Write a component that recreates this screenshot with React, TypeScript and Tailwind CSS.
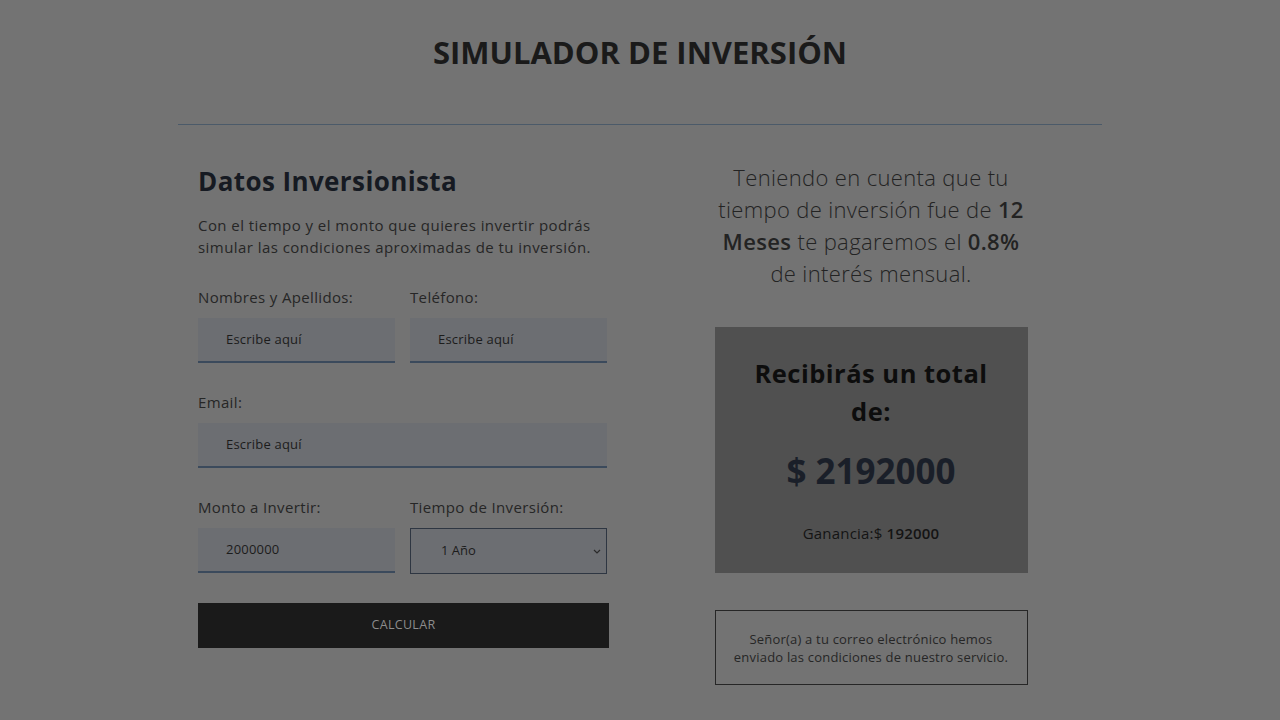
import React from "react";

const font = { fontFamily: '"Open Sans", "Noto Sans", sans-serif' };

function Field({ label, value, wide }: { label: string; value: string; wide?: boolean }) {
  return (
    <div className={wide ? "w-[409px]" : "w-[197px]"}>
      <div className="text-[15px] leading-[22px] tracking-[0.35px] text-[#262626] h-[22px]">{label}</div>
      <div className="mt-[10px] h-[45px] bg-[#6c6e72] border-b-2 border-[#3b4a5c] flex items-center pl-[28px] text-[13px] tracking-[0.2px] text-[#1c1c1c]">
        {value}
      </div>
    </div>
  );
}

export default function App() {
  return (
    <div className="min-h-screen w-full bg-[#737373]" style={font}>
      <div className="mx-auto w-[924px]">
        <h1 className="pt-[32px] text-center text-[31px] leading-[40px] font-bold text-[#1a1a1a]">
          SIMULADOR DE INVERSIÓN
        </h1>
        <div className="mt-[52px] border-b border-[#4b5a69]" />
        <div className="flex">
          <div className="w-[462px] pl-[20px] pt-[39px]">
            <h2 className="text-[26px] leading-[34px] font-bold tracking-[0.4px] text-[#161a22]">Datos Inversionista</h2>
            <p className="mt-[16px] text-[15px] leading-[22px] tracking-[0.45px] text-[#262626] w-[420px]">
              Con el tiempo y el monto que quieres invertir podrás simular las condiciones aproximadas de tu inversión.
            </p>
            <div className="mt-[28px] flex gap-[15px]">
              <Field label="Nombres y Apellidos:" value="Escribe aquí" />
              <Field label="Teléfono:" value="Escribe aquí" />
            </div>
            <div className="mt-[28px]">
              <Field label="Email:" value="Escribe aquí" wide />
            </div>
            <div className="mt-[28px] flex gap-[15px]">
              <Field label="Monto a Invertir:" value="2000000" />
              <div className="w-[197px]">
                <div className="text-[15px] leading-[22px] tracking-[0.35px] text-[#262626] h-[22px]">Tiempo de Inversión:</div>
                <div className="mt-[10px] h-[46px] border border-[#2e3642] flex items-center pl-[30px] pr-[4px] text-[13px] text-[#1c1c1c] bg-[#6c6e72]">
                  <span className="flex-1">1 Año</span>
                  <svg width="10" height="10" viewBox="0 0 10 10" className="text-[#2a2a2a]">
                    <path d="M2 4l3 3 3-3" fill="none" stroke="currentColor" strokeWidth="1.2" />
                  </svg>
                </div>
              </div>
            </div>
            <button className="mt-[29px] w-[411px] h-[45px] bg-[#1a1a1a] text-[12.5px] tracking-[0.3px] text-[#8c8c8c] uppercase">
              Calcular
            </button>
          </div>
          <div className="w-[462px] flex flex-col items-center pt-[36px]">
            <p className="w-[313px] text-center text-[22px] leading-[32px] font-light tracking-[0.35px] text-[#232323]">
              Teniendo en cuenta que tu tiempo de inversión fue de <b className="font-semibold">12</b>{" "}
              <b className="font-semibold">Meses</b> te pagaremos el <b className="font-semibold">0.8%</b> de interés mensual.
            </p>
            <div className="mt-[38px] w-[313px] h-[246px] bg-[#505050] flex flex-col items-center pt-[27px]">
              <div className="w-[250px] text-center text-[25.5px] leading-[38px] font-bold tracking-[0.5px] text-[#0d0d0d]">
                Recibirás un total de:
              </div>
              <div className="mt-[19px] text-[35px] leading-[44px] font-bold text-[#1a1f29]">$ 2192000</div>
              <div className="mt-[29px] text-[15px] leading-[22px] tracking-[0.2px] text-[#141414]">
                Ganancia:$ <b className="font-semibold">192000</b>
              </div>
            </div>
            <div className="mt-[37px] w-[313px] h-[75px] border border-[#262626] flex items-center justify-center text-center text-[13px] leading-[18px] tracking-[0.2px] text-[#262626] px-[18px]">
              Señor(a) a tu correo electrónico hemos enviado las condiciones de nuestro servicio.
            </div>
          </div>
        </div>
      </div>
    </div>
  );
}
